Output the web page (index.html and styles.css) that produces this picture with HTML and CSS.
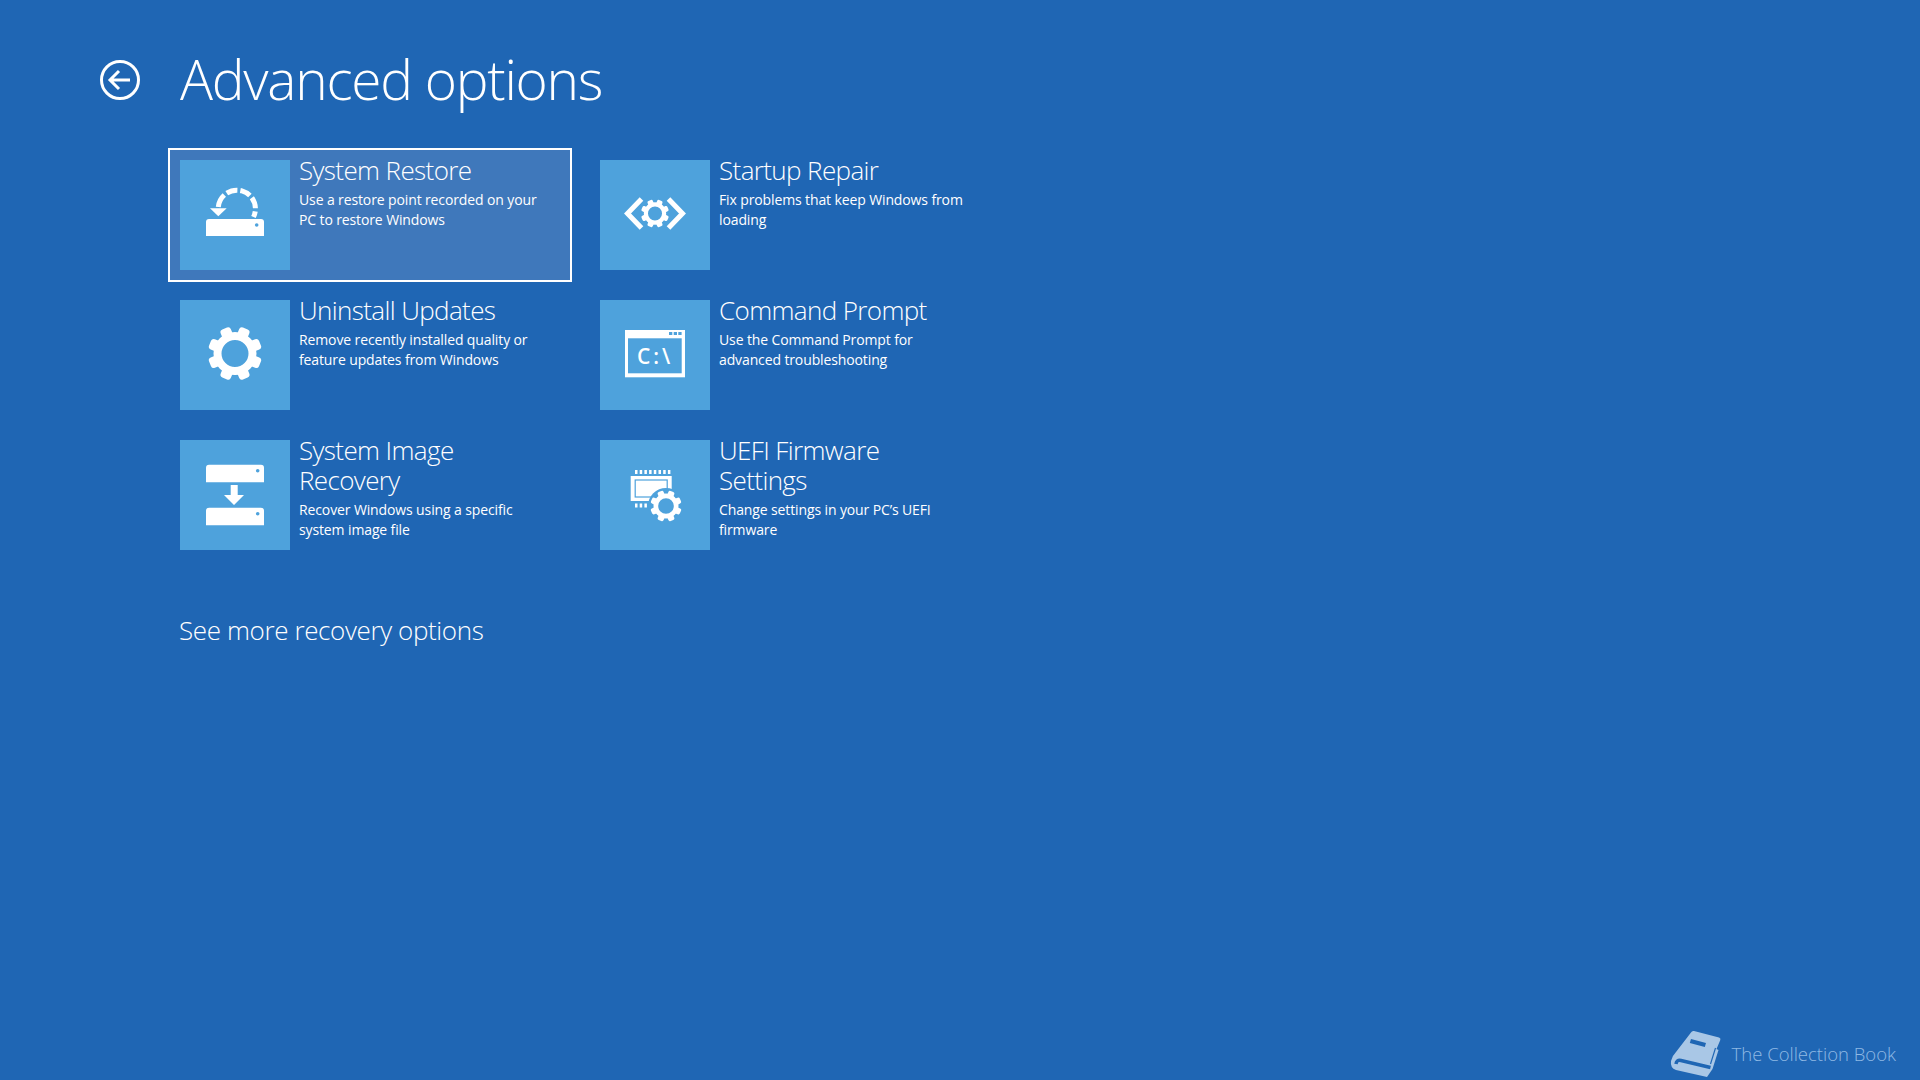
FILE: index.html
```html
<!DOCTYPE html>
<html lang="en">
<head>
<meta charset="utf-8">
<title>Advanced options</title>
<link rel="stylesheet" href="styles.css">
</head>
<body>
<svg class="defs" width="0" height="0" aria-hidden="true">
  <defs>
    <g id="gear">
      <circle r="17.500" class="gear-ring"/>
      <g class="gear-teeth">
        <rect x="-5.500" y="-27" width="11" height="10" rx="3" transform="rotate(22.5)"/>
        <rect x="-5.500" y="-27" width="11" height="10" rx="3" transform="rotate(67.5)"/>
        <rect x="-5.500" y="-27" width="11" height="10" rx="3" transform="rotate(112.5)"/>
        <rect x="-5.500" y="-27" width="11" height="10" rx="3" transform="rotate(157.5)"/>
        <rect x="-5.500" y="-27" width="11" height="10" rx="3" transform="rotate(202.5)"/>
        <rect x="-5.500" y="-27" width="11" height="10" rx="3" transform="rotate(247.5)"/>
        <rect x="-5.500" y="-27" width="11" height="10" rx="3" transform="rotate(292.5)"/>
        <rect x="-5.500" y="-27" width="11" height="10" rx="3" transform="rotate(337.5)"/>
      </g>
    </g>
  </defs>
</svg>
<main class="page">
  <header class="header">
    <svg class="back" viewBox="0 0 40 40">
      <circle cx="20" cy="20" r="18.500" class="line" stroke-width="3"/>
      <path d="M30 20H10M19 11l-9 9 9 9" class="line" stroke-width="3"/>
    </svg>
    <h1 class="title">Advanced options</h1>
  </header>
  <section class="grid">
    <article class="card card-focus">
      <div class="tile">
        <svg class="glyph" viewBox="0 0 110 110">
          <path d="M73.500 57A18.600 18.600 0 1 0 38.300 47" class="line" stroke-width="5" stroke-dasharray="6 3 11 3 11 3 11 3 20"/>
          <path d="M30 48.300h16.700l-8.400 8z" class="solid"/>
          <path d="M29 59h52a3 3 0 0 1 3 3v14H26V62a3 3 0 0 1 3-3z" class="solid"/>
          <circle cx="76.700" cy="65" r="1.800" class="hole"/>
        </svg>
      </div>
      <div class="copy">
        <h2 class="name">System Restore</h2>
        <p class="desc">Use a restore point recorded on your PC to restore Windows</p>
      </div>
    </article>
    <article class="card">
      <div class="tile">
        <svg class="glyph" viewBox="0 0 110 110">
          <path d="M41.500 39 27.500 53.500 41.500 68M68.500 39 82.500 53.500 68.500 68" class="line" stroke-width="5"/>
          <use href="#gear" transform="translate(55 53.500) scale(.52)"/>
        </svg>
      </div>
      <div class="copy">
        <h2 class="name">Startup Repair</h2>
        <p class="desc">Fix problems that keep Windows from loading</p>
      </div>
    </article>
    <article class="card">
      <div class="tile">
        <svg class="glyph" viewBox="0 0 110 110">
          <use href="#gear" transform="translate(55 53.500)"/>
        </svg>
      </div>
      <div class="copy">
        <h2 class="name">Uninstall Updates</h2>
        <p class="desc">Remove recently installed quality or feature updates from Windows</p>
      </div>
    </article>
    <article class="card">
      <div class="tile">
        <svg class="glyph" viewBox="0 0 110 110">
          <rect x="25" y="30" width="60" height="47.300" class="solid"/>
          <rect x="28" y="38.300" width="53.700" height="35" class="hole"/>
          <rect x="69" y="32" width="3.300" height="3" class="hole"/>
          <rect x="73.700" y="32" width="3.300" height="3" class="hole"/>
          <rect x="78.300" y="32" width="3.300" height="3" class="hole"/>
          <text x="37" y="63.500" class="cmd-text">C:\</text>
        </svg>
      </div>
      <div class="copy">
        <h2 class="name">Command Prompt</h2>
        <p class="desc">Use the Command Prompt for advanced troubleshooting</p>
      </div>
    </article>
    <article class="card">
      <div class="tile">
        <svg class="glyph" viewBox="0 0 110 110">
          <path d="M29 24.700h52a3 3 0 0 1 3 3v14.600H26V27.700a3 3 0 0 1 3-3z" class="solid"/>
          <circle cx="77.700" cy="30.700" r="1.800" class="hole"/>
          <path d="M50.700 45h7v10H64L54 65 44 55h6.700z" class="solid"/>
          <path d="M29 67.700h52a3 3 0 0 1 3 3v14.600H26V70.700a3 3 0 0 1 3-3z" class="solid"/>
          <circle cx="77.700" cy="73.700" r="1.800" class="hole"/>
        </svg>
      </div>
      <div class="copy">
        <h2 class="name">System Image Recovery</h2>
        <p class="desc">Recover Windows using a specific system image file</p>
      </div>
    </article>
    <article class="card">
      <div class="tile">
        <svg class="glyph" viewBox="0 0 110 110">
          <path d="M35 30h2.500v4H35zM39.700 30h2.500v4h-2.500zM44.400 30h2.500v4h-2.500zM49.100 30h2.500v4h-2.500zM53.800 30h2.500v4h-2.500zM58.500 30h2.500v4h-2.500zM63.200 30h2.500v4h-2.500zM67.900 30h2.500v4h-2.500zM35 63.500h2.500v4H35zM39.700 63.500h2.500v4h-2.500zM44.400 63.500h2.500v4h-2.500z" class="solid"/>
          <rect x="30.700" y="36" width="41" height="25" class="solid"/>
          <rect x="35.200" y="40" width="32" height="17" class="chip-line"/>
          <circle cx="66" cy="66" r="18" class="hole"/>
          <use href="#gear" transform="translate(66 66) scale(.58)"/>
        </svg>
      </div>
      <div class="copy">
        <h2 class="name">UEFI Firmware Settings</h2>
        <p class="desc">Change settings in your PC’s UEFI firmware</p>
      </div>
    </article>
  </section>
  <p class="more">See more recovery options</p>
</main>
<aside class="mark">
  <svg class="book" viewBox="0 0 70 55">
    <path d="M34 6 59 12.500Q61 13 60.300 15L56.500 24 58.500 25 52.500 44 47 52 16 45Q10 43 11 36 12 31 16 27L31 7.500Q32 5.500 34 6z" class="book-fill"/>
    <path d="M16 39Q16.500 34.500 21 35.500L50.500 42.500" class="book-stripe"/>
    <path d="M55.500 23 50.500 39" class="book-gap"/>
    <path d="M31 14 46 18 44.800 22 29.800 18z" class="book-slot"/>
  </svg>
  <span class="mark-text">The Collection Book</span>
</aside>
</body>
</html>
```
FILE: styles.css
```css
* { box-sizing: border-box; margin: 0; padding: 0; }
html, body { width: 1920px; height: 1080px; overflow: hidden; }
body {
  background: #1f66b4;
  color: #fff;
  font-family: "Open Sans", "Noto Sans", "Liberation Sans", sans-serif;
  font-weight: 300;
  position: relative;
}
.defs { position: absolute; }
.page { padding: 40px 0 0 100px; }
.header { display: flex; align-items: center; height: 80px; }
.back { width: 40px; height: 40px; flex: none; margin-right: 40px; }
.title { font-size: 55px; font-weight: 300; line-height: 80px; letter-spacing: -1.25px; white-space: nowrap; margin-bottom: 2px; }
.line { fill: none; stroke: #fff; }
.solid { fill: #fff; }
.hole { fill: #4ea2dc; }
.chip-line { fill: #fff; stroke: #4ea2dc; stroke-width: 1.200; }
.gear-ring { fill: none; stroke: #fff; stroke-width: 8; }
.gear-teeth { fill: #fff; }
.cmd-text { font-family: "Open Sans", sans-serif; font-weight: 600; font-size: 21px; letter-spacing: 3px; fill: #fff; }
.grid {
  display: grid;
  grid-template-columns: 404px 404px;
  grid-auto-rows: 134px;
  column-gap: 16px;
  row-gap: 6px;
  margin: 28px 0 0 68px;
}
.card {
  display: flex;
  gap: 9px;
  padding: 10px;
  border: 2px solid transparent;
}
.card-focus { border-color: #fff; background: #3f78bb; }
.tile { width: 110px; height: 110px; flex: none; background: #4ea2dc; }
.glyph { display: block; width: 110px; height: 110px; }
.copy { min-width: 0; width: 250px; }
.name { font-size: 26px; font-weight: 300; line-height: 30px; letter-spacing: -0.62px; margin-top: -5px; }
.desc { font-size: 14px; font-weight: 400; line-height: 20px; letter-spacing: -0.12px; margin-top: 5px; }
.more { font-size: 26px; font-weight: 300; line-height: 34px; letter-spacing: -0.38px; margin: 51px 0 0 79px; }
.mark {
  position: absolute;
  right: 24px;
  bottom: 0;
  display: flex;
  align-items: center;
  gap: 2px;
  height: 55px;
}
.book { width: 70px; height: 55px; }
.mark-text { font-size: 18.500px; font-weight: 300; color: #8fb9e4; margin-top: 2px; }
.book-fill { fill: #a9c7e6; }
.book-slot { fill: #1f66b4; }
.book-stripe { fill: none; stroke: #1f66b4; stroke-width: 3.500; }
.book-gap { fill: none; stroke: #1f66b4; stroke-width: 1.200; }
```
